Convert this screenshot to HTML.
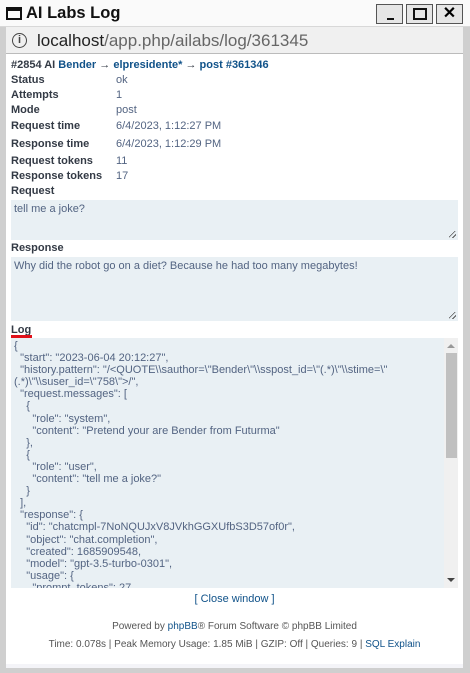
<!DOCTYPE html>
<html><head><style>
*{margin:0;padding:0;box-sizing:border-box}
body{width:470px;height:673px;background:#cfcfcf;font-family:"Liberation Sans",sans-serif;position:relative;overflow:hidden}
.win{position:absolute;left:6px;top:0;width:457px;height:668px;background:#fff}
.title{position:absolute;left:0;top:0;width:470px;height:27px;background:#fafafa;border-bottom:1px solid #d8d8d8}
.title .t{position:absolute;left:26px;top:4px;font-weight:bold;font-size:16.5px;color:#111}
.ico{position:absolute;left:6px;top:7px;width:16px;height:13px;border:2px solid #111;border-top-width:4px}
.btn{position:absolute;top:4px;width:27px;height:20px;border:1px solid #555;background:#e6e6e6}
.url{position:absolute;left:6px;top:27px;width:457px;height:27px;background:#f0f0f0;border-bottom:1px solid #bbb;font-size:17px;color:#666;line-height:27px;padding-left:31px}
.url b{font-weight:normal;color:#222}
.info{position:absolute;left:12px;top:33px;width:15px;height:15px;border:1.5px solid #444;border-radius:50%;font-size:11px;text-align:center;line-height:12px;color:#444;font-weight:bold}
.c{position:absolute;left:11px;font-size:11px}
.l{font-weight:bold;color:#333a45}
.v{position:absolute;left:116px;color:#536482;font-size:11px}
.a{color:#105289;font-weight:bold}
.ta{position:absolute;left:11px;width:447px;background:#e9f0f4;color:#536482;font-size:11px;padding:3px 3px}
.grip{position:absolute;right:2px;bottom:2px;width:7px;height:7px;background:linear-gradient(135deg,transparent 40%,#555 40%,#555 50%,transparent 50%,transparent 70%,#555 70%,#555 80%,transparent 80%)}
pre{font-family:"Liberation Sans",sans-serif;font-size:11px;line-height:12.1px;color:#536482;white-space:pre}
.foot{position:absolute;left:6px;width:457px;text-align:center;font-size:10px;color:#555}
</style></head><body>
<div class="win"></div>
<div class="title"><div class="ico"></div><div class="t">AI Labs Log</div>
<div class="btn" style="left:376px"><div style="position:absolute;left:10px;top:13px;width:7px;height:2px;background:#111"></div></div>
<div class="btn" style="left:406px"><div style="position:absolute;left:6px;top:3px;width:14px;height:12px;border:2px solid #111"></div></div>
<div class="btn" style="left:436px;font-size:16px;text-align:center;line-height:18px;font-weight:bold">✕</div></div>
<div class="url"><b>localhost</b>/app.php/ailabs/log/361345</div>
<div class="info">i</div>
<div class="c l" style="top:59px;color:#333a45">#2854 AI <span class="a">Bender</span> <span style="font-weight:normal">→</span> <span class="a">elpresidente*</span> <span style="font-weight:normal">→</span> <span class="a">post #361346</span></div>
<div class="c l" style="top:74px">Status</div><div class="v" style="top:74px">ok</div>
<div class="c l" style="top:89px">Attempts</div><div class="v" style="top:89px">1</div>
<div class="c l" style="top:104px">Mode</div><div class="v" style="top:104px">post</div>
<div class="c l" style="top:120px">Request time</div><div class="v" style="top:120px">6/4/2023, 1:12:27 PM</div>
<div class="c l" style="top:138px">Response time</div><div class="v" style="top:138px">6/4/2023, 1:12:29 PM</div>
<div class="c l" style="top:155px">Request tokens</div><div class="v" style="top:155px">11</div>
<div class="c l" style="top:170px">Response tokens</div><div class="v" style="top:170px">17</div>
<div class="c l" style="top:185px">Request</div>
<div class="ta" style="top:200px;height:40px">tell me a joke?<div class="grip"></div></div>
<div class="c l" style="top:242px">Response</div>
<div class="ta" style="top:257px;height:64px">Why did the robot go on a diet? Because he had too many megabytes!<div class="grip"></div></div>
<div class="c l" style="top:324px">Log</div>
<div style="position:absolute;left:11px;top:335px;width:21px;height:3px;background:#e0101a"></div>
<div class="ta" style="top:338px;height:250px;overflow:hidden;padding:2px 3px"><pre>{
  "start": "2023-06-04 20:12:27",
  "history.pattern": "/&lt;QUOTE\\sauthor=\"Bender\"\\sspost_id=\"(.*)\"\\stime=\"
(.*)\"\\suser_id=\"758\"&gt;/",
  "request.messages": [
    {
      "role": "system",
      "content": "Pretend your are Bender from Futurma"
    },
    {
      "role": "user",
      "content": "tell me a joke?"
    }
  ],
  "response": {
    "id": "chatcmpl-7NoNQUJxV8JVkhGGXUfbS3D57of0r",
    "object": "chat.completion",
    "created": 1685909548,
    "model": "gpt-3.5-turbo-0301",
    "usage": {
      "prompt_tokens": 27</pre>
<div style="position:absolute;left:433px;top:0;width:14px;height:250px;background:#f0f0f0"></div>
<div style="position:absolute;left:435px;top:15px;width:11px;height:105px;background:#c0c0c0"></div>
<div style="position:absolute;left:436px;top:6px;width:0;height:0;border-left:4px solid transparent;border-right:4px solid transparent;border-bottom:4px solid #999"></div>
<div style="position:absolute;left:436px;top:240px;width:0;height:0;border-left:4px solid transparent;border-right:4px solid transparent;border-top:4px solid #444"></div>
</div>
<div class="foot" style="top:593px;font-size:11px;color:#105289">[ Close window ]</div>
<div class="foot" style="top:621px">Powered by <span style="color:#105289">phpBB</span>® Forum Software © phpBB Limited</div>
<div class="foot" style="top:639px">Time: 0.078s | Peak Memory Usage: 1.85 MiB | GZIP: Off | Queries: 9 | <span style="color:#105289">SQL Explain</span></div>
<div style="position:absolute;left:6px;top:664px;width:457px;height:4px;background:#f4f4f8"></div>
</body></html>
